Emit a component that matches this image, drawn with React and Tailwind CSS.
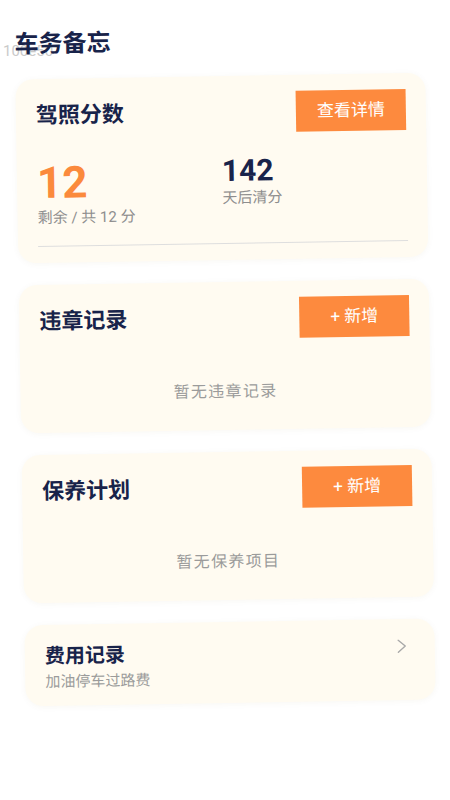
import React from 'react'

const font = "font-['Roboto','Noto_Sans_CJK_SC',sans-serif]"

function OrangeButton({ children }) {
  return (
    <button className="flex h-[41px] w-[110px] shrink-0 items-center justify-center bg-[#fd8a3e] text-[17px] font-normal text-white">
      {children}
    </button>
  )
}

function Card({ className = '', children }) {
  return (
    <div className={`rounded-[18px] bg-[#fffbf1] shadow-[0_1px_6px_rgba(120,90,20,0.05)] ${className}`}>
      {children}
    </div>
  )
}

function EmptyCard({ title, empty }) {
  return (
    <Card className="px-5 pt-4 pb-[26px]">
      <div className="flex items-center justify-between">
        <h2 className="text-[22px] font-bold leading-8 text-[#18234a]">{title}</h2>
        <OrangeButton>+ 新增</OrangeButton>
      </div>
      <p className="mt-[41px] text-center text-base leading-6 tracking-[1.3px] text-[#9b9b9b]">{empty}</p>
    </Card>
  )
}

export default function App() {
  return (
    <div className={`relative min-h-[800px] overflow-hidden bg-white ${font}`}>
      <span className="absolute left-[3px] top-[41px] text-[15px] leading-5 text-[#cacaca]">100e50</span>

      <div className="origin-[225px_360px] -rotate-[0.95deg] px-5 pt-[25px] pb-4">
        <h1 className="mb-[19px] text-2xl font-bold leading-8 text-[#18234a]">车务备忘</h1>

        <div className="flex flex-col gap-[22px]">
          <Card className="px-5 pt-4 pb-4">
            <div className="flex items-center justify-between">
              <h2 className="text-[22px] font-bold leading-8 text-[#18234a]">驾照分数</h2>
              <OrangeButton>查看详情</OrangeButton>
            </div>
            <div className="mt-[23px] grid grid-cols-2">
              <div>
                <div className="text-[44px] font-bold leading-[48px] text-[#fb8a3c]">12</div>
                <div className="mt-px text-[15px] leading-5 text-[#8e8e8e]">剩余 / 共 12 分</div>
              </div>
              <div>
                <div className="text-[30px] font-bold leading-none text-[#18234a]">142</div>
                <div className="mt-px text-[15px] leading-[22px] text-[#8e8e8e]">天后清分</div>
              </div>
            </div>
            <div className="mt-[18px] border-t border-[#dedede]" />
          </Card>

          <EmptyCard title="违章记录" empty="暂无违章记录" />
          <EmptyCard title="保养计划" empty="暂无保养项目" />

          <Card className="flex items-start justify-between pl-5 pr-7 pt-[17px] pb-[13px]">
            <div>
              <h2 className="text-xl font-bold leading-7 text-[#18234a]">费用记录</h2>
              <p className="mt-px text-[15px] leading-[22px] text-[#9b9b9b]">加油停车过路费</p>
            </div>
            <svg width="10" height="14" viewBox="0 0 10 14" className="mt-[3px]" fill="none">
              <polyline points="1.5,1 8.5,7 1.5,13" stroke="#a9a9a9" strokeWidth="1.4" strokeLinecap="round" strokeLinejoin="round" />
            </svg>
          </Card>
        </div>
      </div>
    </div>
  )
}
